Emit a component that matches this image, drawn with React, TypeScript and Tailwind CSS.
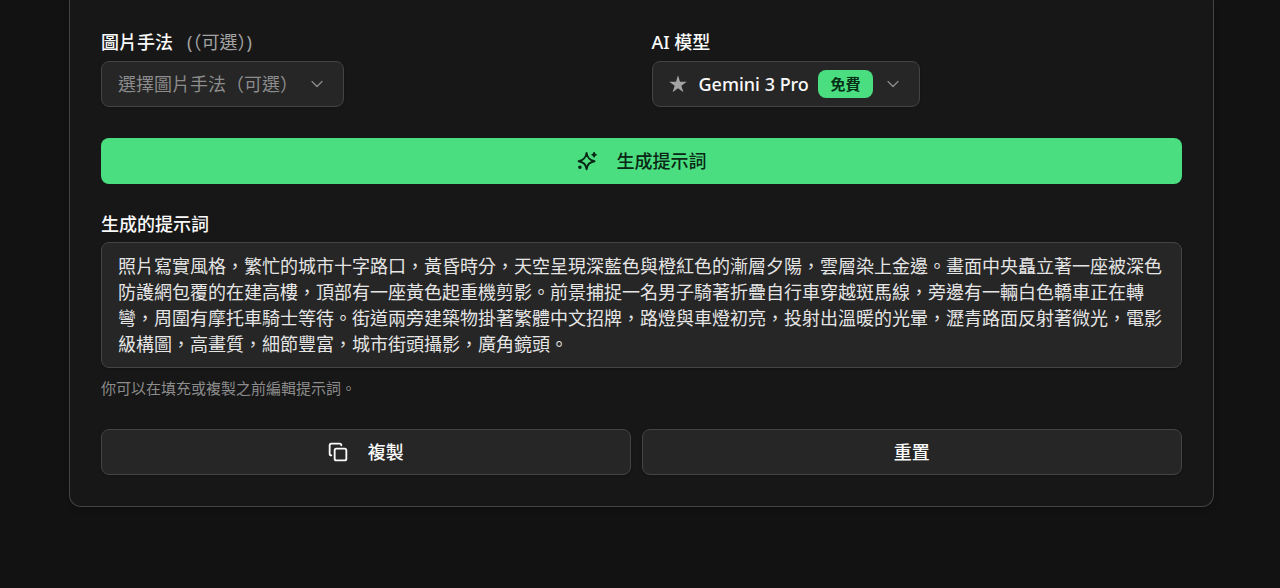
import { useState } from "react";
import { ChevronDown, Copy } from "lucide-react";

const DEFAULT_PROMPT =
  "照片寫實風格，繁忙的城市十字路口，黃昏時分，天空呈現深藍色與橙紅色的漸層夕陽，雲層染上金邊。畫面中央矗立著一座被深色防護網包覆的在建高樓，頂部有一座黃色起重機剪影。前景捕捉一名男子騎著折疊自行車穿越斑馬線，旁邊有一輛白色轎車正在轉彎，周圍有摩托車騎士等待。街道兩旁建築物掛著繁體中文招牌，路燈與車燈初亮，投射出溫暖的光暈，瀝青路面反射著微光，電影級構圖，高畫質，細節豐富，城市街頭攝影，廣角鏡頭。";

const fieldStyles = "rounded-lg border border-[#444444] bg-[#262626] shadow-sm outline-none";
const labelStyles = "block leading-6 font-medium text-neutral-50";

function StarIcon() {
  return (
    <svg viewBox="0 0 24 24" className="size-5" fill="currentColor" aria-hidden="true">
      <path d="M12 1.5l2.4 7.7h8.1l-6.5 4.8 2.5 7.8-6.5-4.8-6.5 4.8L8 14 1.5 9.2h8.1z" />
    </svg>
  );
}

function SparkleIcon() {
  return (
    <svg
      viewBox="0 0 24 24"
      className="size-5"
      fill="none"
      stroke="currentColor"
      strokeWidth={2.4}
      strokeLinecap="round"
      strokeLinejoin="round"
      aria-hidden="true"
    >
      <path d="M11.5 2.5c1 5.8 3.2 8.200 9.500 9.700c-6.300 1.500-8.500 3.800-9.500 9.600c-1-5.800-3.200-8.100-9.500-9.600c6.300-1.500 8.500-3.900 9.500-9.700z" />
      <path d="M20.500 2.500v4M18.500 4.500h4" />
      <circle cx="3.500" cy="19.500" r="1" fill="currentColor" />
    </svg>
  );
}

export default function App() {
  const [prompt, setPrompt] = useState(DEFAULT_PROMPT);

  return (
    <main className="min-h-screen bg-[#121212] pr-[66px] pl-[69px] font-['Noto_Sans','Noto_Sans_CJK_TC',sans-serif] text-[18px] text-neutral-200">
      <section className="rounded-b-xl border border-t-0 border-[#444444] bg-[#171717] px-[31px] pt-[30px] pb-[31px] shadow-md">
        <div className="grid grid-cols-2 gap-5">
          <div>
            <label htmlFor="technique" className={labelStyles}>
              圖片手法
              <span className="ml-3.5 font-normal text-[#a3a3a3] [font-feature-settings:'halt']">(（可選）)</span>
            </label>
            <div className="relative mt-[7px] w-[243px]">
              <select
                id="technique"
                defaultValue=""
                className={`${fieldStyles} h-[46px] w-full appearance-none pl-4 text-[#8c8c8c]`}
              >
                <option value="">選擇圖片手法（可選）</option>
              </select>
              <ChevronDown className="pointer-events-none absolute top-[13px] right-[17px] size-5 text-[#8c8c8c]" strokeWidth={1.5} />
            </div>
          </div>

          <div>
            <label htmlFor="model" className={labelStyles}>
              AI 模型
            </label>
            <div className="relative mt-[7px] w-[268px]">
              <select
                id="model"
                defaultValue="gemini-3-pro"
                className={`${fieldStyles} h-[46px] w-full appearance-none pl-[46px] font-medium text-neutral-50`}
              >
                <option value="gemini-3-pro">Gemini 3 Pro</option>
              </select>
              {/* Star, badge and chevron sit over the select */}
              <div className="pointer-events-none absolute inset-0 flex items-center justify-between pr-[17px] pl-4 text-[#a3a3a3]">
                <StarIcon />
                <div className="flex items-center gap-2.5">
                  <span className="rounded-lg bg-[#4ade80] px-3 text-[15px] leading-7 font-semibold text-[#052e16]">免費</span>
                  <ChevronDown className="size-5 text-[#8c8c8c]" strokeWidth={1.5} />
                </div>
              </div>
            </div>
          </div>
        </div>

        <button
          type="button"
          className="mt-[31px] flex h-[46px] w-full items-center justify-center gap-5 rounded-lg bg-[#4ade80] font-medium text-[#0a2614]"
        >
          <SparkleIcon />
          生成提示詞
        </button>

        <div className="mt-7">
          <label htmlFor="prompt" className={labelStyles}>
            生成的提示詞
          </label>
          <textarea
            id="prompt"
            rows={4}
            value={prompt}
            onChange={(e) => setPrompt(e.target.value)}
            className={`${fieldStyles} mt-1.5 block w-full resize-none overflow-hidden px-4 py-[10px] leading-[26px] text-neutral-200`}
          />
          <p className="mt-2 text-[15px] leading-6 text-[#8c8c8c]">你可以在填充或複製之前編輯提示詞。</p>
        </div>

        <div className="mt-[29px] flex gap-[11px]">
          <button
            type="button"
            className={`${fieldStyles} flex h-[46px] w-[49%] items-center justify-center gap-5 font-medium text-neutral-50`}
          >
            <Copy className="size-5" strokeWidth={2.2} />
            複製
          </button>
          <button
            type="button"
            onClick={() => setPrompt("")}
            className={`${fieldStyles} h-[46px] flex-1 font-medium text-neutral-50`}
          >
            重置
          </button>
        </div>
      </section>
    </main>
  );
}
